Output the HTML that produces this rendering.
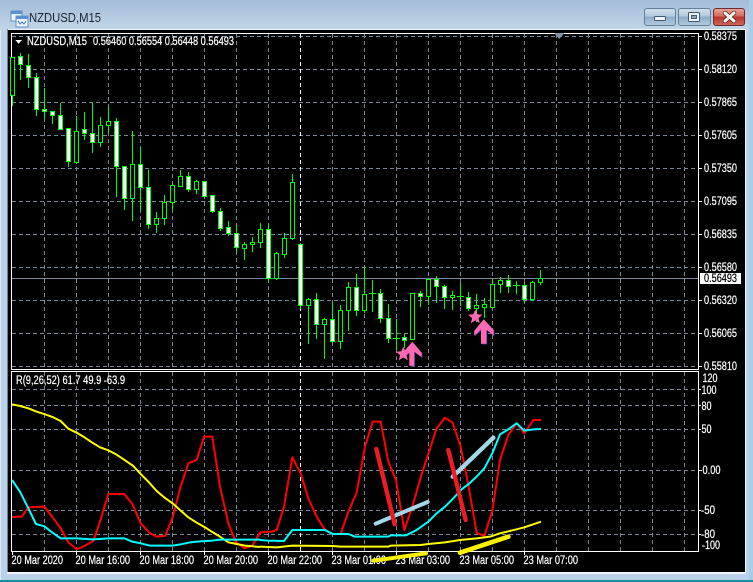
<!DOCTYPE html>
<html><head><meta charset="utf-8"><style>
html,body{margin:0;padding:0;background:#b9d1ea}
body{width:753px;height:582px;overflow:hidden;position:relative}
svg{position:absolute;left:0;top:0}
text{font-family:"Liberation Sans",sans-serif;font-size:11.5px;fill:#fff;stroke:#fff;stroke-width:.22px}
</style></head><body>
<svg width="753" height="582" viewBox="0 0 753 582">
<defs>
<linearGradient id="tb" x1="0" y1="0" x2="0" y2="1"><stop offset="0" stop-color="#a3bcd8"/><stop offset="1" stop-color="#c3d6e8"/></linearGradient>
<linearGradient id="bn" x1="0" y1="0" x2="0" y2="1"><stop offset="0" stop-color="#d3e0ec"/><stop offset=".45" stop-color="#b4c8dc"/><stop offset=".5" stop-color="#8dabc8"/><stop offset="1" stop-color="#b3cbe0"/></linearGradient>
<linearGradient id="cl" x1="0" y1="0" x2="0" y2="1"><stop offset="0" stop-color="#e6a89c"/><stop offset=".45" stop-color="#d5685a"/><stop offset=".5" stop-color="#b8342a"/><stop offset="1" stop-color="#d0695a"/></linearGradient>
</defs>
<rect width="753" height="582" fill="#b9d1ea"/>
<rect width="753" height="30" fill="url(#tb)"/>
<rect x="0" y="30" width="1" height="550" fill="#dfe9f3"/>
<rect x="749" y="0" width="4" height="582" fill="#a9cde6"/>
<rect x="0" y="580" width="753" height="2" fill="#1f8c9e"/>
<rect x="7" y="29" width="739" height="545" fill="#f2f6fa"/>
<rect x="7" y="29" width="1" height="543" fill="#6f7f8f"/>
<rect x="8" y="30" width="737" height="542" fill="#000"/>

<!-- title icon -->
<g shape-rendering="crispEdges">
<rect x="11" y="11" width="11" height="10" fill="#eef5fc" stroke="#5a90d0"/>
<rect x="11" y="11" width="11" height="3" fill="#5a90d0"/>
<rect x="16" y="16" width="12" height="11" fill="#eef5fc" stroke="#5a90d0"/>
<rect x="16" y="16" width="12" height="3" fill="#5a90d0"/>
</g>
<path d="M18 21l2 3 2-2 2 2 2-3" fill="none" stroke="#3f78c0"/>
<text x="29" y="22" textLength="72" lengthAdjust="spacingAndGlyphs" style="font-size:12.5px;fill:#1a2430;stroke:none">NZDUSD,M15</text>

<!-- window buttons -->
<rect x="644.5" y="8.5" width="31" height="17" rx="2.5" fill="url(#bn)" stroke="#64809c"/>
<rect x="678.5" y="8.5" width="32" height="17" rx="2.5" fill="url(#bn)" stroke="#64809c"/>
<rect x="713.5" y="8.5" width="31" height="17" rx="2.5" fill="url(#cl)" stroke="#6e2a30"/>
<rect x="654.5" y="16.5" width="11" height="4" rx="1" fill="#f0f4f8" stroke="#46586c"/>
<rect x="688.5" y="12.5" width="11" height="9" rx="1" fill="#f0f4f8" stroke="#46586c"/>
<rect x="691.5" y="15.5" width="5" height="3" fill="#8ea6bc" stroke="#46586c" stroke-width="1"/>
<path d="M725 13l9 8M734 13l-9 8" stroke="#4a2020" stroke-width="4.5" stroke-linecap="round"/>
<path d="M725 13l9 8M734 13l-9 8" stroke="#f6f2f0" stroke-width="3" stroke-linecap="round"/>

<!-- grid -->
<g stroke="#778899" stroke-width="1" stroke-dasharray="4 3" fill="none" shape-rendering="crispEdges">
<path d="M12 36.5H698M12 69.5H698M12 102.5H698M12 135.5H698M12 168.5H698M12 201.5H698M12 234.5H698M12 267.5H698M12 300.5H698M12 333.5H698M12 366.5H698"/>
<path d="M12 389.5H698M12 405.5H698M12 429.5H698M12 470.5H698M12 510.5H698M12 534.5H698"/>
<path d="M44.5 34V369M76.5 34V369M108.5 34V369M140.5 34V369M172.5 34V369M204.5 34V369M236.5 34V369M268.5 34V369M332.5 34V369M364.5 34V369M396.5 34V369M428.5 34V369M460.5 34V369M492.5 34V369M524.5 34V369M556.5 34V369M588.5 34V369M620.5 34V369M652.5 34V369M684.5 34V369"/>
<path d="M44.5 372V551M76.5 372V551M108.5 372V551M140.5 372V551M172.5 372V551M204.5 372V551M236.5 372V551M268.5 372V551M332.5 372V551M364.5 372V551M396.5 372V551M428.5 372V551M460.5 372V551M492.5 372V551M524.5 372V551M556.5 372V551M588.5 372V551M620.5 372V551M652.5 372V551M684.5 372V551"/>
</g>
<path d="M300.5 34V369M300.5 372V551" stroke="#fff" stroke-dasharray="4 3" shape-rendering="crispEdges"/>
<path d="M12 278.5H698" stroke="#778899" shape-rendering="crispEdges"/>

<!-- frame -->
<g stroke="#fff" fill="none" shape-rendering="crispEdges">
<path d="M11.5 33.5H698.5V369.5H11.5Z"/>
<path d="M11.5 371.5H698.5V551.5H11.5Z"/>
<path d="M699 36.5h3M699 69.5h3M699 102.5h3M699 135.5h3M699 168.5h3M699 201.5h3M699 234.5h3M699 267.5h3M699 300.5h3M699 333.5h3M699 366.5h3"/>
<path d="M699 389.5h2M699 405.5h2M699 429.5h2M699 470.5h3M699 510.5h2M699 534.5h2"/>
<path d="M12.5 552v3M76.5 552v3M140.5 552v3M204.5 552v3M268.5 552v3M332.5 552v3M396.5 552v3M460.5 552v3M524.5 552v3"/>
</g>
<path d="M554 33H564.5L559.2 39Z" fill="#8493a3"/>

<!-- wicks -->
<path stroke="#0f0" fill="none" shape-rendering="crispEdges" d="M12.5 57V106M20.5 53V80M28.5 54V88M36.5 73V116M44.5 88V119M52.5 111V124M60.5 103V130M68.5 128V167M76.5 116V163M84.5 112V140M92.5 102V153M100.5 117V147M108.5 106V133M116.5 118V197M124.5 166V210M132.5 131V221M140.5 147V211M148.5 170V229M156.5 212V233M164.5 195V225M172.5 183V210M180.5 170V187M188.5 172V192M196.5 180V194M204.5 181V197M212.5 195V213M220.5 208V231M228.5 221V236M236.5 225V252M244.5 242V260M252.5 237V252M260.5 223V248M268.5 224V282M276.5 252V280M284.5 233V258M292.5 174V240M300.5 243V309M308.5 298V344M316.5 293V339M324.5 318V359M332.5 302V343M340.5 305V349M348.5 282V331M356.5 274V316M364.5 266V313M372.5 280V312M380.5 289V323M388.5 304V343M396.5 319V350M404.5 334V348M412.5 293V340M420.5 291V307M428.5 279V305M436.5 276V303M444.5 285V309M452.5 291V310M460.5 283V306M468.5 292V311M476.5 294V322M484.5 298V318M492.5 279V307M500.5 277V293M508.5 275V293M516.5 281V294M524.5 283V303M532.5 281V301M540.5 270V285M369 293.5h7M393 338.5h7M457 296.5h7M513 285.5h7"/>
<!-- hollow bodies -->
<path fill="#000" stroke="#0f0" shape-rendering="crispEdges" d="M10.5 57.5h4v38h-4zM74.5 131.5h4v31h-4zM98.5 125.5h4v17h-4zM106.5 121.5h4v4h-4zM130.5 164.5h4v34h-4zM154.5 218.5h4v6h-4zM162.5 202.5h4v16h-4zM170.5 185.5h4v17h-4zM178.5 176.5h4v10h-4zM194.5 181.5h4v8h-4zM242.5 244.5h4v4h-4zM250.5 242.5h4v2h-4zM258.5 229.5h4v13h-4zM274.5 253.5h4v25h-4zM282.5 238.5h4v16h-4zM290.5 182.5h4v56h-4zM306.5 299.5h4v6h-4zM322.5 319.5h4v5h-4zM338.5 310.5h4v31h-4zM346.5 287.5h4v23h-4zM362.5 294.5h4v16h-4zM410.5 293.5h4v46h-4zM426.5 279.5h4v17h-4zM450.5 295.5h4v2h-4zM474.5 305.5h4v3h-4zM482.5 304.5h4v3h-4zM490.5 284.5h4v23h-4zM498.5 280.5h4v4h-4zM530.5 282.5h4v17h-4zM538.5 278.5h4v4h-4z"/>
<!-- filled bodies -->
<path fill="#fff" stroke="#0f0" shape-rendering="crispEdges" d="M18.5 56.5h4v8h-4zM26.5 65.5h4v12h-4zM34.5 77.5h4v32h-4zM42.5 109.5h4v2h-4zM50.5 111.5h4v4h-4zM58.5 115.5h4v14h-4zM66.5 128.5h4v33h-4zM82.5 129.5h4v4h-4zM90.5 133.5h4v9h-4zM114.5 121.5h4v45h-4zM122.5 166.5h4v32h-4zM138.5 164.5h4v23h-4zM146.5 187.5h4v37h-4zM186.5 176.5h4v13h-4zM202.5 181.5h4v15h-4zM210.5 195.5h4v16h-4zM218.5 211.5h4v17h-4zM226.5 227.5h4v6h-4zM234.5 233.5h4v14h-4zM266.5 229.5h4v49h-4zM298.5 244.5h4v61h-4zM314.5 299.5h4v25h-4zM330.5 319.5h4v22h-4zM354.5 287.5h4v23h-4zM378.5 293.5h4v25h-4zM386.5 318.5h4v20h-4zM402.5 337.5h4v3h-4zM418.5 293.5h4v3h-4zM434.5 279.5h4v7h-4zM442.5 286.5h4v11h-4zM466.5 297.5h4v11h-4zM506.5 280.5h4v6h-4zM522.5 285.5h4v14h-4z"/>

<!-- pink markers -->
<path d="M412.3 341.7L421.7 352.7V357.3L414.3 351.7V365.7H409.3V351.7L402.3 358.3V353.3Z" fill="#3a2a90" transform="translate(.8 .8)"/>
<path d="M412.3 341.7L421.7 352.7V357.3L414.3 351.7V365.7H409.3V351.7L402.3 358.3V353.3Z" fill="#ff69b4"/>
<path d="M483.7 319.3L493.7 330V335.7L486.5 329.7V343.7H481V329.7L474.3 335.7V330.7Z" fill="#3a2a90" transform="translate(.8 .8)"/>
<path d="M483.7 319.3L493.7 330V335.7L486.5 329.7V343.7H481V329.7L474.3 335.7V330.7Z" fill="#ff69b4"/>
<path d="M403.3 346.5l2 4.8 5.2.4-4 3.4 1.3 5.1-4.5-2.8-4.5 2.8 1.3-5.1-4-3.4 5.2-.4z" fill="#ff69b4"/>
<path d="M475.3 309.5l2 4.8 5.2.4-4 3.4 1.3 5.1-4.5-2.8-4.5 2.8 1.3-5.1-4-3.4 5.2-.4z" fill="#ff69b4"/>

<!-- indicator lines: left -->
<g fill="none" stroke-width="6" stroke-linejoin="round" transform="translate(0 370) scale(.33333)">
<polyline stroke="#f00" points="36,441 65,440 85,412 133,410 160,445 182,475 205,517 230,538 255,527 280,513 300,455 325,372 373,372 397,402 422,460 450,490 470,500 495,498 517,445 542,350 565,280 590,270 612,200 637,200 660,350 685,460 707,515 733,535 757,527 780,487"/>
<polyline stroke="#ff0" points="36,103 60,108 85,115 110,125 135,133 160,142 182,153 205,176 230,188 255,203 277,218 300,232 325,241 350,254 375,271 400,288 420,310 445,335 470,363 495,384 520,402 540,420 565,442 590,458 615,472 640,488 660,500 685,517 710,522 735,527 780,531"/>
<polyline stroke="#0ff" points="36,330 60,365 85,415 108,462 133,469 160,490 182,505 230,505 280,508 325,505 373,505 397,515 422,520 450,527 517,527 542,523 565,518 590,515 637,512 660,509 780,509"/>
</g>
<!-- indicator lines: right -->
<g fill="none" stroke-width="6" stroke-linejoin="round" transform="translate(260 390) scale(.33333)">
<polyline stroke="#f00" points="0,427 35,425 50,420 72,350 97,202 122,250 145,325 170,380 195,420 218,432 242,432 265,365 290,308 315,170 338,95 362,95 385,215 408,270 433,420 457,350 482,262 530,115 555,83 578,98 602,170 625,285 650,428 673,438 697,362 720,210 745,135 770,100 793,130 820,90 843,90"/>
<polyline stroke="#ff0" points="0,470 50,472 97,467 218,468 242,470 385,470 392,467 482,465 505,462 555,457 600,450 650,445 690,440 720,430 770,418 793,412 843,395"/>
<polyline stroke="#0ff" points="0,450 25,452 72,453 97,420 195,420 218,432 265,432 285,440 385,440 392,436 438,436 470,420 505,395 530,370 555,350 580,325 605,298 625,283 650,260 673,235 697,190 720,133 745,118 770,100 793,122 820,118 843,117"/>
</g>

<!-- header texts -->
<path d="M15.3 40H22L18.6 43.7Z" fill="#fff"/>
<text x="27" y="45" textLength="60" lengthAdjust="spacingAndGlyphs">NZDUSD,M15</text>
<text x="93" y="45" textLength="141" lengthAdjust="spacingAndGlyphs">0.56460 0.56554 0.56448 0.56493</text>
<text x="16" y="384" textLength="109" lengthAdjust="spacingAndGlyphs">R(9,26,52) 61.7 49.9 -63.9</text>

<!-- price axis -->
<g>
<text x="704" y="40" textLength="33" lengthAdjust="spacingAndGlyphs">0.58375</text>
<text x="704" y="73" textLength="33" lengthAdjust="spacingAndGlyphs">0.58120</text>
<text x="704" y="106" textLength="33" lengthAdjust="spacingAndGlyphs">0.57865</text>
<text x="704" y="139" textLength="33" lengthAdjust="spacingAndGlyphs">0.57605</text>
<text x="704" y="172" textLength="33" lengthAdjust="spacingAndGlyphs">0.57350</text>
<text x="704" y="205" textLength="33" lengthAdjust="spacingAndGlyphs">0.57095</text>
<text x="704" y="238" textLength="33" lengthAdjust="spacingAndGlyphs">0.56835</text>
<text x="704" y="271" textLength="33" lengthAdjust="spacingAndGlyphs">0.56580</text>
<rect x="700" y="273" width="41" height="11" fill="#fff"/>
<text x="704" y="282" textLength="33" lengthAdjust="spacingAndGlyphs" style="fill:#000;stroke:#000">0.56493</text>
<text x="704" y="304" textLength="33" lengthAdjust="spacingAndGlyphs">0.56320</text>
<text x="704" y="337" textLength="33" lengthAdjust="spacingAndGlyphs">0.56065</text>
<text x="704" y="370" textLength="33" lengthAdjust="spacingAndGlyphs">0.55810</text>
<text x="702.5" y="382" textLength="15" lengthAdjust="spacingAndGlyphs">120</text>
<text x="701.5" y="394" textLength="15" lengthAdjust="spacingAndGlyphs">100</text>
<text x="701.5" y="410" textLength="10" lengthAdjust="spacingAndGlyphs">80</text>
<text x="701.5" y="433" textLength="10" lengthAdjust="spacingAndGlyphs">50</text>
<text x="702.5" y="474" textLength="18" lengthAdjust="spacingAndGlyphs">0.00</text>
<text x="701" y="514" textLength="14" lengthAdjust="spacingAndGlyphs">-50</text>
<text x="701" y="538" textLength="14" lengthAdjust="spacingAndGlyphs">-80</text>
<text x="702" y="549" textLength="18" lengthAdjust="spacingAndGlyphs">-100</text>
</g>

<!-- time axis -->
<g>
<text x="11.5" y="564" textLength="51.5" lengthAdjust="spacingAndGlyphs">20 Mar 2020</text>
<text x="75.5" y="564" textLength="54.5" lengthAdjust="spacingAndGlyphs">20 Mar 16:00</text>
<text x="139.5" y="564" textLength="54.5" lengthAdjust="spacingAndGlyphs">20 Mar 18:00</text>
<text x="203.5" y="564" textLength="54.5" lengthAdjust="spacingAndGlyphs">20 Mar 20:00</text>
<text x="267.5" y="564" textLength="54.5" lengthAdjust="spacingAndGlyphs">20 Mar 22:00</text>
<text x="331.5" y="564" textLength="54.5" lengthAdjust="spacingAndGlyphs">23 Mar 01:00</text>
<text x="395.5" y="564" textLength="54.5" lengthAdjust="spacingAndGlyphs">23 Mar 03:00</text>
<text x="459.5" y="564" textLength="54.5" lengthAdjust="spacingAndGlyphs">23 Mar 05:00</text>
<text x="523.5" y="564" textLength="54.5" lengthAdjust="spacingAndGlyphs">23 Mar 07:00</text>
</g>

<!-- hand-drawn overlays -->
<g fill="none" stroke-linecap="round" transform="translate(260 390) scale(.33333)">
<path d="M347 401L503 336" stroke="#a5d8e6" stroke-width="12"/>
<path d="M578 260L700 143" stroke="#a5d8e6" stroke-width="13"/>
<path d="M349 177L404 403" stroke="#ed1c24" stroke-width="13"/>
<path d="M565 180L617 390" stroke="#ed1c24" stroke-width="13"/>
<path d="M340 512L498 490" stroke="#fff200" stroke-width="12"/>
<path d="M600 488L745 440" stroke="#fff200" stroke-width="14"/>
</g>
</svg>
</body></html>
